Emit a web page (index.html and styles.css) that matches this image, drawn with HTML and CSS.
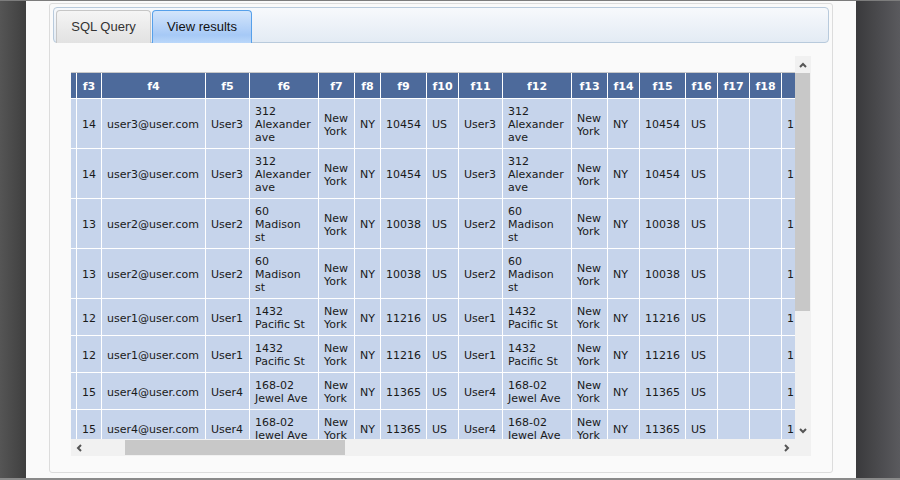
FILE: index.html
```html
<!DOCTYPE html>
<html>
<head>
<meta charset="utf-8">
<link rel="stylesheet" href="styles.css">
</head>
<body>
<div class="screen">
  <div class="shade shade-left"></div>
  <div class="page">
    <div class="box">
      <div class="tabbar">
        <div class="tab">SQL Query</div>
        <div class="tab active">View results</div>
      </div>
      <div class="content">
        <div class="scroller">
          <div class="viewport">
            <div class="table-wrap">
              <div class="grid">
                <div class="h">f2</div><div class="h">f3</div><div class="h">f4</div><div class="h">f5</div><div class="h">f6</div><div class="h">f7</div><div class="h">f8</div><div class="h">f9</div><div class="h">f10</div><div class="h">f11</div><div class="h">f12</div><div class="h">f13</div><div class="h">f14</div><div class="h">f15</div><div class="h">f16</div><div class="h">f17</div><div class="h">f18</div><div class="h"></div>

                <div class="c"></div><div class="c">14</div><div class="c">user3@user.com</div><div class="c">User3</div><div class="c">312 Alexander ave</div><div class="c">New York</div><div class="c">NY</div><div class="c">10454</div><div class="c">US</div><div class="c">User3</div><div class="c">312 Alexander ave</div><div class="c">New York</div><div class="c">NY</div><div class="c">10454</div><div class="c">US</div><div class="c"></div><div class="c"></div><div class="c">1</div>

                <div class="c"></div><div class="c">14</div><div class="c">user3@user.com</div><div class="c">User3</div><div class="c">312 Alexander ave</div><div class="c">New York</div><div class="c">NY</div><div class="c">10454</div><div class="c">US</div><div class="c">User3</div><div class="c">312 Alexander ave</div><div class="c">New York</div><div class="c">NY</div><div class="c">10454</div><div class="c">US</div><div class="c"></div><div class="c"></div><div class="c">1</div>

                <div class="c"></div><div class="c">13</div><div class="c">user2@user.com</div><div class="c">User2</div><div class="c">60 Madison st</div><div class="c">New York</div><div class="c">NY</div><div class="c">10038</div><div class="c">US</div><div class="c">User2</div><div class="c">60 Madison st</div><div class="c">New York</div><div class="c">NY</div><div class="c">10038</div><div class="c">US</div><div class="c"></div><div class="c"></div><div class="c">1</div>

                <div class="c"></div><div class="c">13</div><div class="c">user2@user.com</div><div class="c">User2</div><div class="c">60 Madison st</div><div class="c">New York</div><div class="c">NY</div><div class="c">10038</div><div class="c">US</div><div class="c">User2</div><div class="c">60 Madison st</div><div class="c">New York</div><div class="c">NY</div><div class="c">10038</div><div class="c">US</div><div class="c"></div><div class="c"></div><div class="c">1</div>

                <div class="c"></div><div class="c">12</div><div class="c">user1@user.com</div><div class="c">User1</div><div class="c">1432 Pacific St</div><div class="c">New York</div><div class="c">NY</div><div class="c">11216</div><div class="c">US</div><div class="c">User1</div><div class="c">1432 Pacific St</div><div class="c">New York</div><div class="c">NY</div><div class="c">11216</div><div class="c">US</div><div class="c"></div><div class="c"></div><div class="c">1</div>

                <div class="c"></div><div class="c">12</div><div class="c">user1@user.com</div><div class="c">User1</div><div class="c">1432 Pacific St</div><div class="c">New York</div><div class="c">NY</div><div class="c">11216</div><div class="c">US</div><div class="c">User1</div><div class="c">1432 Pacific St</div><div class="c">New York</div><div class="c">NY</div><div class="c">11216</div><div class="c">US</div><div class="c"></div><div class="c"></div><div class="c">1</div>

                <div class="c"></div><div class="c">15</div><div class="c">user4@user.com</div><div class="c">User4</div><div class="c">168-02 Jewel Ave</div><div class="c">New York</div><div class="c">NY</div><div class="c">11365</div><div class="c">US</div><div class="c">User4</div><div class="c">168-02 Jewel Ave</div><div class="c">New York</div><div class="c">NY</div><div class="c">11365</div><div class="c">US</div><div class="c"></div><div class="c"></div><div class="c">1</div>

                <div class="c"></div><div class="c">15</div><div class="c">user4@user.com</div><div class="c">User4</div><div class="c">168-02 Jewel Ave</div><div class="c">New York</div><div class="c">NY</div><div class="c">11365</div><div class="c">US</div><div class="c">User4</div><div class="c">168-02 Jewel Ave</div><div class="c">New York</div><div class="c">NY</div><div class="c">11365</div><div class="c">US</div><div class="c"></div><div class="c"></div><div class="c">1</div>
              </div>
            </div>
          </div>
          <div class="vbar">
            <div class="vbtn"><svg width="8" height="6" viewBox="0 0 8 6"><polyline points="1,5 4,2 7,5" fill="none" stroke="#555" stroke-width="2"/></svg></div>
            <div class="vthumb"></div>
            <div class="fill"></div>
            <div class="vbtn"><svg width="8" height="6" viewBox="0 0 8 6"><polyline points="1,1 4,4 7,1" fill="none" stroke="#555" stroke-width="2"/></svg></div>
          </div>
          <div class="hbar">
            <div class="hbtn"><svg width="6" height="8" viewBox="0 0 6 8"><polyline points="5,1 2,4 5,7" fill="none" stroke="#555" stroke-width="2"/></svg></div>
            <div class="hgap"></div>
            <div class="hthumb"></div>
            <div class="fill"></div>
            <div class="hbtn"><svg width="6" height="8" viewBox="0 0 6 8"><polyline points="1,1 4,4 1,7" fill="none" stroke="#555" stroke-width="2"/></svg></div>
          </div>
          <div class="corner"></div>
        </div>
      </div>
    </div>
  </div>
  <div class="shade shade-right"></div>
</div>
</body>
</html>
```
FILE: styles.css
```css
* { box-sizing: border-box; }
html, body { margin: 0; padding: 0; }
body { width: 900px; height: 480px; overflow: hidden; background: #444; }

.screen {
  display: flex;
  width: 900px;
  height: 480px;
  border-top: 1px solid #7c7c7c;
  border-bottom: 2px solid #8a8a8a;
}
.shade-left { width: 26px; background: linear-gradient(to right, #555555, #3f3f3f); }
.shade-right { width: 44px; background: linear-gradient(to right, #3a3a3c, #5a5a5e); }

.page {
  width: 830px;
  background: #fafafa;
  padding: 2px 23px 0 23px;
}

.box {
  width: 784px;
  height: 470px;
  border: 1px solid #dcdcdc;
  border-radius: 3px;
  padding: 3px;
  background: #fafafa;
}

.tabbar {
  display: flex;
  height: 36px;
  border: 1px solid #b8cadc;
  border-radius: 4px;
  background: linear-gradient(#f7f9fc, #e3ebf4);
  padding: 2px 0 0 2px;
}
.tab {
  height: 33px;
  margin-bottom: -1px;
  width: 95px;
  margin-right: 1px;
  border: 1px solid #c6c6c6;
  border-bottom: none;
  border-radius: 4px 4px 0 0;
  background: linear-gradient(#f5f5f5, #e9e9e9 60%, #e2e2e2);
  font-family: "Liberation Sans", Arial, sans-serif;
  font-size: 13px;
  color: #333;
  display: flex;
  align-items: center;
  justify-content: center;
  padding-bottom: 2px;
}
.tab.active {
  width: 100px;
  border-color: #56a0ea;
  background: linear-gradient(#d3e5fb, #b3d1f8 55%, #a6c9f6 75%, #bad7fa);
  color: #111;
}

.content { padding: 13px 0 0 18px; }

.scroller {
  display: grid;
  grid-template-columns: 724px 16px;
  grid-template-rows: 383px 17px;
}
.viewport {
  overflow: hidden;
  background: #fafafa;
  padding-top: 16px;
}
.table-wrap {
  border-top: 1px solid #c8c8c8;
  width: 100%;
}
.grid {
  display: grid;
  grid-template-columns: 40px 24px 103px 43px 68px 35px 25px 45px 31px 43px 68px 35px 31px 45px 31px 31px 31px 60px;
  gap: 1px;
  background: #ffffff;
  margin-left: -35px;
  width: max-content;
  font-family: "DejaVu Sans", Verdana, sans-serif;
  font-size: 11px;
  line-height: 13px;
}
.h {
  background: #4d6a9b;
  color: #ffffff;
  font-weight: bold;
  padding: 7px 0 5px;
  display: flex;
  justify-content: center;
  align-items: center;
  white-space: nowrap;
  overflow: hidden;
}
.c {
  background: #c6d4eb;
  color: #1a1a1a;
  padding: 6px 5px 4px;
  display: flex;
  align-items: center;
}

.vbar {
  display: flex;
  flex-direction: column;
  background: #f1f1f1;
}
.vbtn {
  height: 17px;
  display: flex;
  align-items: center;
  justify-content: center;
}
.vthumb {
  height: 238px;
  background: #c8c8c8;
  margin-right: 1px;
}
.fill { flex: 1; }

.hbar {
  display: flex;
  background: #f1f1f1;
}
.hbtn {
  width: 16px;
  display: flex;
  align-items: center;
  justify-content: center;
}
.hgap { width: 38px; }
.hthumb {
  width: 220px;
  background: #c8c8c8;
  margin: 1px 0;
}
.corner { background: #f1f1f1; }
```
